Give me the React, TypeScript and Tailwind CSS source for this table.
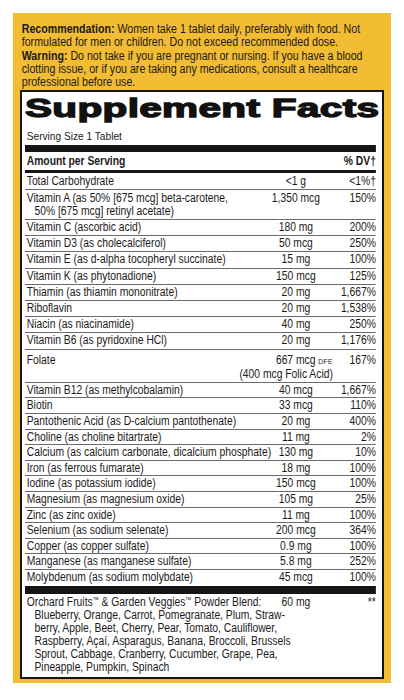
import React from 'react';

type Row = { name: React.ReactNode; amount: React.ReactNode; dv: string };

const rowsA: Row[] = [
    { name: 'Vitamin C (ascorbic acid)', amount: '180 mg', dv: '200%' },
    { name: 'Vitamin D3 (as cholecalciferol)', amount: '50 mcg', dv: '250%' },
    { name: 'Vitamin E (as d-alpha tocopheryl succinate)', amount: '15 mg', dv: '100%' },
    { name: 'Vitamin K (as phytonadione)', amount: '150 mcg', dv: '125%' },
    { name: 'Thiamin (as thiamin mononitrate)', amount: '20 mg', dv: '1,667%' },
    { name: 'Riboflavin', amount: '20 mg', dv: '1,538%' },
    { name: 'Niacin (as niacinamide)', amount: '40 mg', dv: '250%' },
    { name: 'Vitamin B6 (as pyridoxine HCl)', amount: '20 mg', dv: '1,176%' },
];

const rowsB: Row[] = [
    { name: 'Vitamin B12 (as methylcobalamin)', amount: '40 mcg', dv: '1,667%' },
    { name: 'Biotin', amount: '33 mcg', dv: '110%' },
    { name: 'Pantothenic Acid (as D-calcium pantothenate)', amount: '20 mg', dv: '400%' },
    { name: 'Choline (as choline bitartrate)', amount: '11 mg', dv: '2%' },
    { name: 'Calcium (as calcium carbonate, dicalcium phosphate)', amount: '130 mg', dv: '10%' },
    { name: 'Iron (as ferrous fumarate)', amount: '18 mg', dv: '100%' },
    { name: 'Iodine (as potassium iodide)', amount: '150 mcg', dv: '100%' },
    { name: 'Magnesium (as magnesium oxide)', amount: '105 mg', dv: '25%' },
    { name: 'Zinc (as zinc oxide)', amount: '11 mg', dv: '100%' },
    { name: 'Selenium (as sodium selenate)', amount: '200 mcg', dv: '364%' },
    { name: 'Copper (as copper sulfate)', amount: '0.9 mg', dv: '100%' },
    { name: 'Manganese (as manganese sulfate)', amount: '5.8 mg', dv: '252%' },
    { name: 'Molybdenum (as sodium molybdate)', amount: '45 mcg', dv: '100%' },
];

// table is laid out 408px wide, then squeezed to 351px to get the condensed label face
const FactRow: React.FC<{ row: Row; last?: boolean; tight?: boolean }> = ({ row, last, tight }) => (
    <div className={`flex ${tight ? 'leading-[14.6px]' : 'leading-[15.2px]'} ${last ? '' : 'border-b border-[#6b6b6b]'}`}>
        <div className="flex-1 min-w-0 pl-[2px] whitespace-nowrap">{row.name}</div>
        <div className="w-[88px] text-center whitespace-nowrap">{row.amount}</div>
        <div className="w-[49px] text-right whitespace-nowrap">{row.dv}</div>
    </div>
);

const Tm = () => <span className="relative -top-[4px] text-[7px] leading-none">™</span>;

export default function App() {
    return (
        <div className="bg-white w-[404px] h-[700px] overflow-hidden pt-[13px] pl-[13px] font-['Liberation_Sans',Arial,sans-serif] text-[#1c1a1a]">
            <div className="w-[378px] bg-[#f2bc33] px-[7px] pb-[4px] pt-[10px]">
                {/* label notes */}
                <div className="h-[67px]">
                    <div className="w-[420px] origin-top-left scale-x-[0.865] pl-[2px] text-[12.3px] leading-[13.3px] whitespace-nowrap">
                        <b>Recommendation:</b> Women take 1 tablet daily, preferably with food. Not
                        <br />
                        formulated for men or children. Do not exceed recommended dose.
                        <br />
                        <b>Warning:</b> Do not take if you are pregnant or nursing. If you have a blood
                        <br />
                        clotting issue, or if you are taking any medications, consult a healthcare
                        <br />
                        professional before use.
                    </div>
                </div>

                {/* facts panel */}
                <div className="border-2 border-[#161414] bg-white pl-[3px] pr-[6px] pb-[3px] text-[12px] overflow-hidden">
                    <div className="mt-[3px] h-[26px] text-[26px] leading-[26px]">
                        <span className="inline-block origin-left scale-x-[1.56] font-bold text-[#111] [-webkit-text-stroke:1.3px_#111] tracking-[0.2px]">
                            Supplement Facts
                        </span>
                    </div>

                    <div className="w-[408px] origin-top-left scale-x-[0.86]">
                        <div className="mt-[8px] pl-[2px] text-[11.8px] leading-[14px]">Serving Size 1 Tablet</div>
                        <div className="mt-[2px] h-[7px] bg-[#161414]" />
                        <div className="flex font-bold leading-[18px]">
                            <div className="flex-1 pl-[2px]">Amount per Serving</div>
                            <div className="text-right">% DV†</div>
                        </div>
                        <div className="h-[3px] bg-[#161414]" />

                        <div className="flex leading-[16px] border-b border-[#6b6b6b]">
                            <div className="flex-1 pl-[2px]">Total Carbohydrate</div>
                            <div className="w-[88px] text-center">&lt;1 g</div>
                            <div className="w-[49px] text-right">&lt;1%†</div>
                        </div>
                        <div className="flex leading-[13px] pt-[2px] pb-[1px] border-b border-[#6b6b6b]">
                            <div className="flex-1 min-w-0 pl-[2px] whitespace-nowrap">
                                Vitamin A (as 50% [675 mcg] beta-carotene,
                                <div className="pl-[9px]">50% [675 mcg] retinyl acetate)</div>
                            </div>
                            <div className="w-[88px] text-center">1,350 mcg</div>
                            <div className="w-[49px] text-right">150%</div>
                        </div>

                        {rowsA.map((r) => (
                            <FactRow key={r.name as string} row={r} />
                        ))}

                        <div className="border-b border-[#6b6b6b] pt-[3px] pb-px">
                            <div className="flex leading-[15.2px]">
                                <div className="flex-1 pl-[2px]">Folate</div>
                                <div className="w-[88px] text-right whitespace-nowrap pr-[1px]">
                                    667 mcg <span className="text-[8px] leading-none tracking-[0.3px]">DFE</span>
                                </div>
                                <div className="w-[49px] text-right">167%</div>
                            </div>
                            <div className="leading-[13px] text-right pr-[50px] whitespace-nowrap">(400 mcg Folic Acid)</div>
                        </div>

                        {rowsB.map((r, i) => (
                            <FactRow key={r.name as string} row={r} tight last={i === rowsB.length - 1} />
                        ))}

                        <div className="mt-px h-[8px] bg-[#161414]" />

                        <div className="pt-[2px]">
                            <div className="flex leading-[13px]">
                                <div className="flex-1 min-w-0 pl-[2px] whitespace-nowrap">
                                    Orchard Fruits<Tm /> &amp; Garden Veggies<Tm /> Powder Blend:
                                </div>
                                <div className="w-[88px] text-center">60 mg</div>
                                <div className="w-[49px] text-right">**</div>
                            </div>
                            <div className="pl-[11px] leading-[13px] whitespace-nowrap">
                                Blueberry, Orange, Carrot, Pomegranate, Plum, Straw-
                                <br />
                                berry, Apple, Beet, Cherry, Pear, Tomato, Cauliflower,
                                <br />
                                Raspberry, Açaí, Asparagus, Banana, Broccoli, Brussels
                                <br />
                                Sprout, Cabbage, Cranberry, Cucumber, Grape, Pea,
                                <br />
                                Pineapple, Pumpkin, Spinach
                            </div>
                        </div>
                    </div>
                </div>
            </div>
        </div>
    );
}
